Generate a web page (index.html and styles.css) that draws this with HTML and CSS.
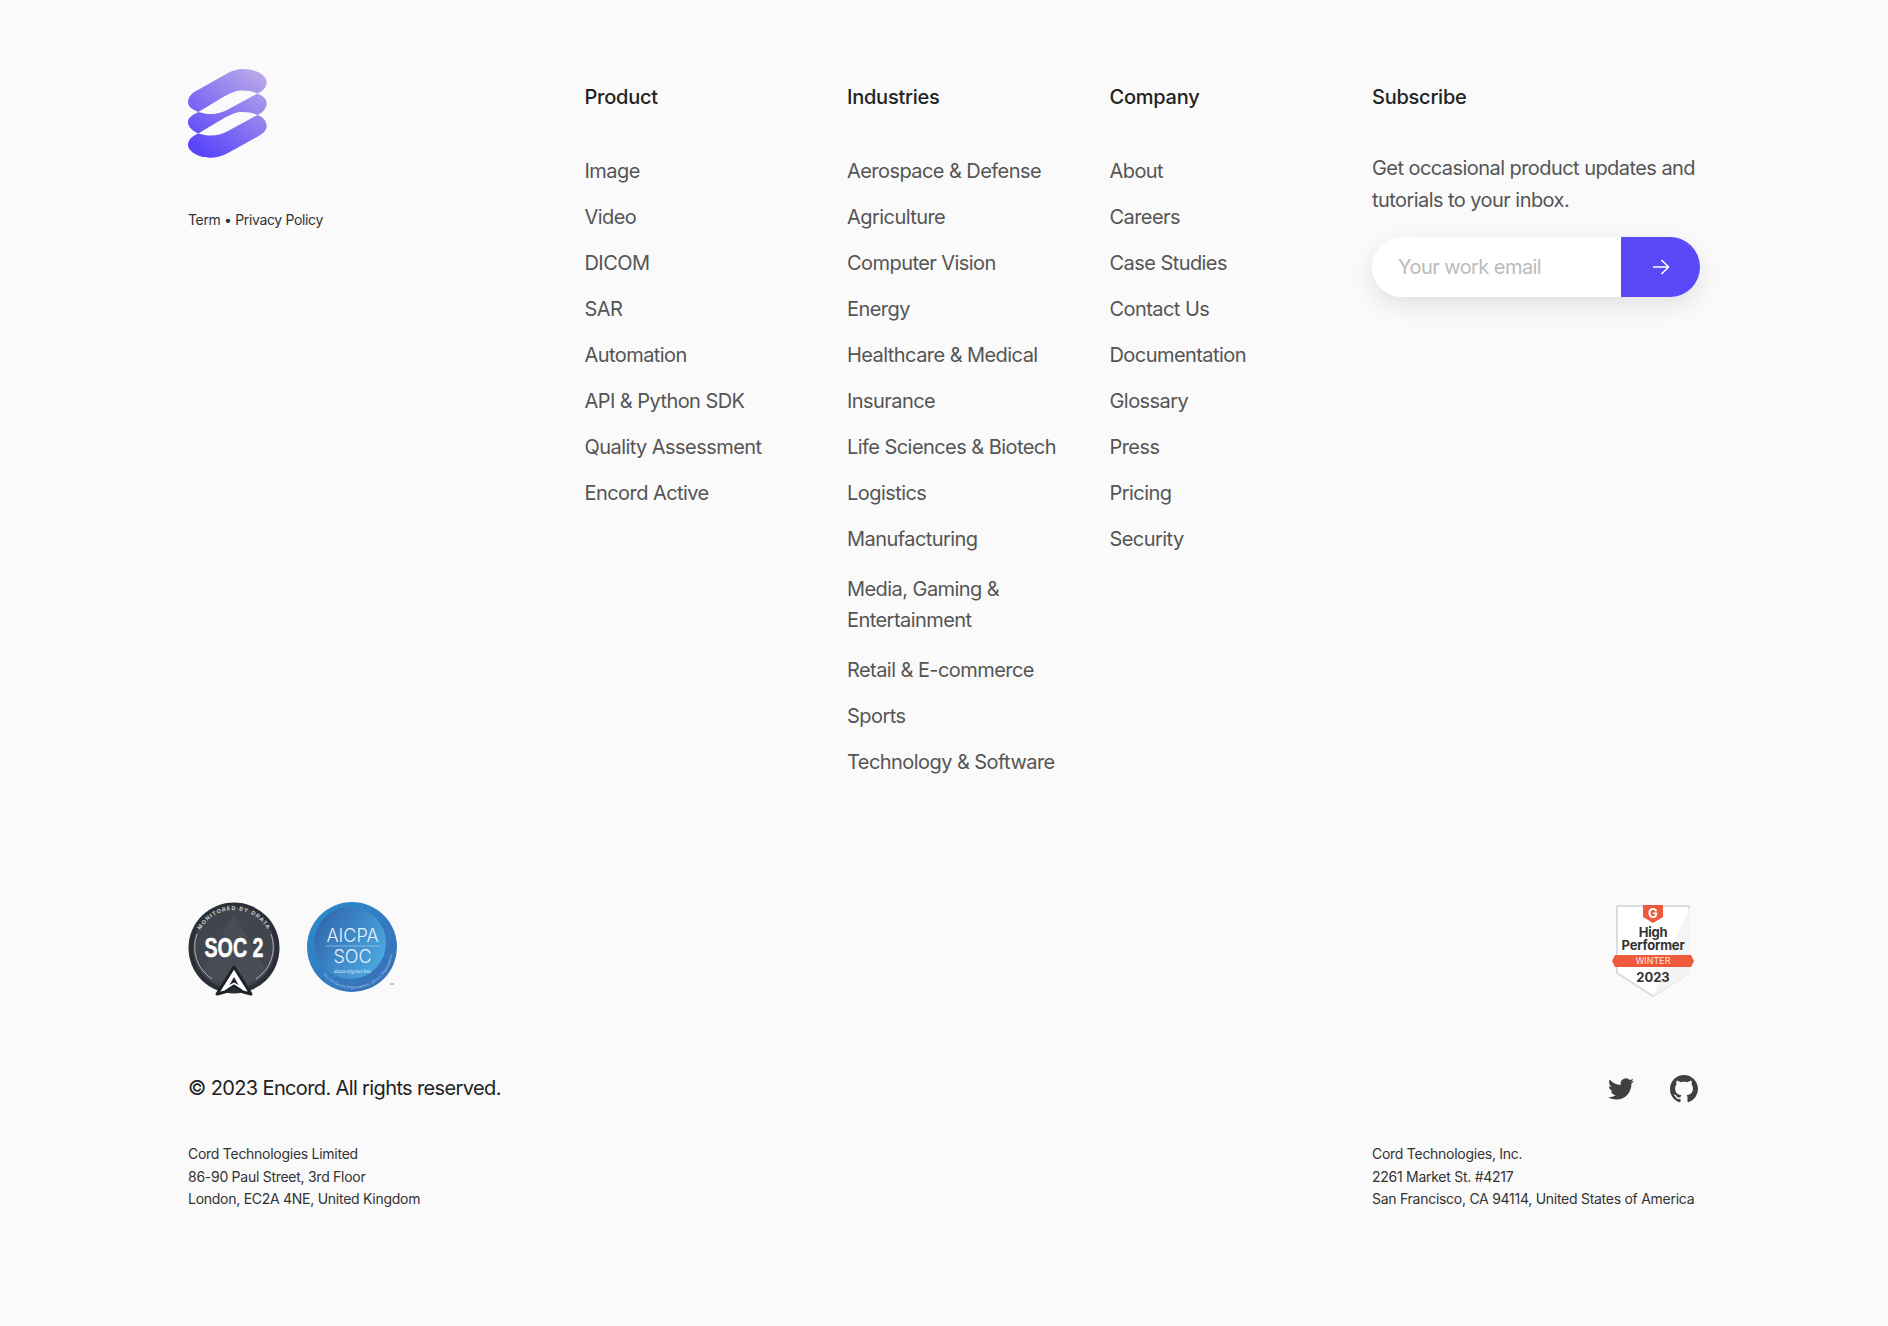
FILE: index.html
```html
<html>
  <head>
    <title>encord footer</title>
    <link rel="stylesheet" href="styles.css">
  </head>
  <body>
    <footer id="footer">
      <div id="columns">
        <div id="brand">
          <svg class="logo" viewBox="0 0 79 89" width="79" height="89">
            <defs>
              <linearGradient id="logo-fill" gradientUnits="userSpaceOnUse" x1="12" y1="82" x2="72" y2="4">
                <stop offset="0" stop-color="#5a45fa"/>
                <stop offset="1" stop-color="#b9a9e8"/>
              </linearGradient>
            </defs>
            <path fill="url(#logo-fill)" d="M10.3 43C3 40 0 37 0 33C0 28 4 24 8 22L40 4C46 1 50 0 55 0C68 0 78 6 78.7 13C79 18 75 22 69.5 24.5C62 21.5 53 20.5 46 23C42 24.5 40 25.5 37 27Z"/>
            <path fill="url(#logo-fill)" d="M10.3 43C20 46 30 46 39 41L69.5 24.5C75 27 78.7 30 78.7 34C78.7 39 75 43.500 69.500 46C62 43 53 42 46 44.500C42 46 40 47 37 48.500L10.300 64.500C3 61 0 57 0 53C0 49 4 46 10.300 43Z"/>
            <path fill="url(#logo-fill)" d="M10.300 64.500C20 67.500 30 67.500 39 62.500L69.500 46C75 48 78.700 52 78.700 57C78.700 61 75 65 69 68L40 84C35 87 28 88.700 22 88.700C10 88.700 0 82 0 76C0 71 4 67 10.300 64.500Z"/>
          </svg>
          <p class="legal"><a>Term</a> • <a>Privacy Policy</a></p>
        </div>

        <nav class="col">
          <h4>Product</h4>
          <a>Image</a>
          <a>Video</a>
          <a>DICOM</a>
          <a>SAR</a>
          <a>Automation</a>
          <a>API &amp; Python SDK</a>
          <a>Quality Assessment</a>
          <a>Encord Active</a>
        </nav>

        <nav class="col">
          <h4>Industries</h4>
          <a>Aerospace &amp; Defense</a>
          <a>Agriculture</a>
          <a>Computer Vision</a>
          <a>Energy</a>
          <a>Healthcare &amp; Medical</a>
          <a>Insurance</a>
          <a>Life Sciences &amp; Biotech</a>
          <a>Logistics</a>
          <a>Manufacturing</a>
          <a class="wrap">Media, Gaming &amp; Entertainment</a>
          <a>Retail &amp; E-commerce</a>
          <a>Sports</a>
          <a>Technology &amp; Software</a>
        </nav>

        <nav class="col">
          <h4>Company</h4>
          <a>About</a>
          <a>Careers</a>
          <a>Case Studies</a>
          <a>Contact Us</a>
          <a>Documentation</a>
          <a>Glossary</a>
          <a>Press</a>
          <a>Pricing</a>
          <a>Security</a>
        </nav>

        <div id="subscribe">
          <h4>Subscribe</h4>
          <p>Get occasional product updates and tutorials to your inbox.</p>
          <form class="signup">
            <input type="text" placeholder="Your work email">
            <button type="button">
              <svg viewBox="0 0 18 18" width="18" height="18" fill="none" stroke="#fff" stroke-width="1.6">
                <path d="M1 9H16.500M9.500 2L16.500 9L9.500 16"/>
              </svg>
            </button>
          </form>
        </div>
      </div>

      <div id="badges">
        <div class="certs">
          <svg class="soc2" viewBox="0 0 92 96" width="92" height="96">
            <defs>
              <path id="soc2-arc" d="M8 46A38 38 0 0 1 84 46"/>
            </defs>
            <circle cx="46" cy="46" r="45.500" fill="#2b2f36"/>
            <circle cx="46" cy="46" r="41" fill="#40454e"/>
            <path d="M46 12L14 68A41 41 0 0 0 78 68Z" fill="#474c55"/>
            <text class="soc2-arc"><textPath href="#soc2-arc" startOffset="50%" text-anchor="middle">MONITORED BY DRATA</textPath></text>
            <path d="M9 32A38 38 0 0 0 24 77M83 32A38 38 0 0 1 68 77" fill="none" stroke="#c9ccd0" stroke-width=".8"/>
            <text class="soc2-title" x="46" y="55" text-anchor="middle" textLength="59" lengthAdjust="spacingAndGlyphs">SOC 2</text>
            <path d="M46 65L63 92L55 90L46 84L37 90L29 92Z" fill="#fff" stroke="#1f2228" stroke-width="3" stroke-linejoin="round"/>
            <path d="M46 75L41.500 83L46 80.500L50.500 83Z" fill="#1f2228"/>
          </svg>
          <svg class="aicpa" viewBox="0 0 92 92" width="92" height="92">
            <defs>
              <linearGradient id="aicpa-ring" x1="0" y1="0" x2="1" y2="1">
                <stop offset="0" stop-color="#2a8ccf"/>
                <stop offset="1" stop-color="#3b6db5"/>
              </linearGradient>
              <linearGradient id="aicpa-core" x1="0" y1="0" x2="1" y2=".6">
                <stop offset="0" stop-color="#2f5fa8"/>
                <stop offset="1" stop-color="#4aa6de"/>
              </linearGradient>
              <path id="aicpa-arc" d="M8 58A39 39 0 0 0 84 36"/>
            </defs>
            <circle cx="45" cy="45" r="45" fill="url(#aicpa-ring)"/>
            <circle cx="43" cy="41" r="36" fill="url(#aicpa-core)"/>
            <text class="aicpa-big" x="45.500" y="39.500" text-anchor="middle">AICPA</text>
            <path d="M19 44H72" stroke="#b7d5ee" stroke-width=".6"/>
            <text class="aicpa-big" x="45.500" y="61" text-anchor="middle">SOC</text>
            <text class="aicpa-small" x="45.500" y="70.500" text-anchor="middle">aicpa.org/soc4so</text>
            <text class="aicpa-ring-text"><textPath href="#aicpa-arc" startOffset="50%" text-anchor="middle">SOC for Service Organizations | Service Organizations</textPath></text>
            <path d="M83 82H87" stroke="#777" stroke-width=".8"/>
          </svg>
        </div>
        <svg class="g2" viewBox="0 0 82 92" width="82" height="92">
          <path d="M5 1H77V68L41 91L5 68Z" fill="#fff" stroke="#dcdcdc" stroke-width="2"/>
          <path d="M78 1V68L41 91Z" fill="#f4f4f4"/>
          <path d="M31 0H51V12L41 18L31 12Z" fill="#f05a3c"/>
          <text class="g2-mark" x="41" y="13" text-anchor="middle">G</text>
          <text class="g2-title" x="41" y="32" text-anchor="middle">High</text>
          <text class="g2-title" x="41" y="45" text-anchor="middle">Performer</text>
          <path d="M3 50H79L82 56L79 62H3L0 56Z" fill="#f05a3c"/>
          <text class="g2-season" x="41" y="59" text-anchor="middle">WINTER</text>
          <text class="g2-year" x="41" y="77" text-anchor="middle">2023</text>
        </svg>
      </div>

      <div id="copyright">
        <span>© 2023 Encord. All rights reserved.</span>
        <div class="social">
          <svg viewBox="0 0 24 24" width="26" height="26" fill="#3f3f3f">
            <path d="M23.953 4.57a10 10 0 01-2.825.775 4.958 4.958 0 002.163-2.723c-.951.555-2.005.959-3.127 1.184a4.92 4.92 0 00-8.384 4.482C7.69 8.095 4.067 6.13 1.64 3.162a4.822 4.822 0 00-.666 2.475c0 1.71.87 3.213 2.188 4.096a4.904 4.904 0 01-2.228-.616v.06a4.923 4.923 0 003.946 4.827 4.996 4.996 0 01-2.212.085 4.936 4.936 0 004.604 3.417 9.867 9.867 0 01-6.102 2.105c-.39 0-.779-.023-1.17-.067a13.995 13.995 0 007.557 2.209c9.053 0 13.998-7.496 13.998-13.985 0-.21 0-.42-.015-.63A9.935 9.935 0 0024 4.59z"/>
          </svg>
          <svg viewBox="0 0 16 16" width="28" height="28" fill="#3f3f3f">
            <path d="M8 0C3.58 0 0 3.58 0 8c0 3.54 2.29 6.53 5.47 7.59.4.07.55-.17.55-.38 0-.19-.01-.82-.01-1.49-2.01.37-2.53-.49-2.69-.94-.09-.23-.48-.94-.82-1.13-.28-.15-.68-.52-.01-.53.63-.01 1.08.58 1.23.82.72 1.21 1.87.87 2.33.66.07-.52.28-.87.51-1.07-1.78-.2-3.64-.89-3.64-3.95 0-.87.31-1.59.82-2.15-.08-.2-.36-1.02.08-2.12 0 0 .67-.21 2.2.82.64-.18 1.32-.27 2-.27.68 0 1.36.09 2 .27 1.53-1.04 2.2-.82 2.2-.82.44 1.1.16 1.92.08 2.12.51.56.82 1.27.82 2.15 0 3.07-1.87 3.75-3.65 3.95.29.25.54.73.54 1.48 0 1.07-.01 1.93-.01 2.2 0 .21.15.46.55.38A8.013 8.013 0 0016 8c0-4.42-3.58-8-8-8z"/>
          </svg>
        </div>
      </div>

      <div id="addresses">
        <address>Cord Technologies Limited<br>86-90 Paul Street, 3rd Floor<br>London, EC2A 4NE, United Kingdom</address>
        <address class="us">Cord Technologies, Inc.<br>2261 Market St. #4217<br>San Francisco, CA 94114, United States of America</address>
      </div>
    </footer>
  </body>
</html>
```

FILE: styles.css
```css
* {
  box-sizing: border-box;
  margin: 0;
  padding: 0;
  font-family: "Inter", "Liberation Sans", sans-serif;
}
body {
  background: #fafafa;
  color: #222;
}
#footer {
  width: 1888px;
  height: 1326px;
  padding: 69px 188px 0;
  display: flex;
  flex-direction: column;
}
#columns {
  display: grid;
  grid-template-columns: 396.5px repeat(3, 262.5px) 1fr;
  height: 833px;
}
h4 {
  font-size: 20px;
  font-weight: 450;
  line-height: 28px;
  letter-spacing: -0.25px;
  color: #222;
  margin-bottom: 29px;
}
.logo {
  display: block;
}
.legal {
  margin-top: 51px;
  font-size: 14px;
  line-height: 22px;
  letter-spacing: -0.35px;
  color: #333;
}
.col,
#subscribe {
  padding-top: 14px;
}
.col {
  display: flex;
  flex-direction: column;
  gap: 19px;
  align-items: flex-start;
}
.col h4 {
  margin-bottom: 28px;
}
.col a {
  font-size: 20px;
  line-height: 27px;
  letter-spacing: -0.56px;
  color: #555;
}
.col a.wrap {
  width: 180px;
  line-height: 31px;
  margin: 2px 0 1.5px;
}
#subscribe p {
  font-size: 20px;
  line-height: 32px;
  letter-spacing: -0.56px;
  color: #555;
  margin-top: 41px;
}
.signup {
  display: flex;
  width: 328px;
  height: 60px;
  margin-top: 21px;
  border-radius: 30px;
  box-shadow: 0 8px 24px rgba(0, 0, 0, 0.1);
}
.signup input {
  flex-grow: 1;
  min-width: 0;
  border: 0;
  outline: none;
  background: white;
  border-radius: 30px 0 0 30px;
  padding-left: 26px;
  font-size: 20px;
  letter-spacing: -0.56px;
}
.signup input::placeholder {
  color: #bbb;
}
.signup button {
  width: 79px;
  flex-shrink: 0;
  border: 0;
  background: #5a49f8;
  border-radius: 0 30px 30px 0;
  display: flex;
  align-items: center;
  justify-content: center;
}
#badges {
  display: flex;
  justify-content: space-between;
  align-items: flex-start;
}
.certs {
  display: flex;
  gap: 27px;
}
.g2 {
  margin-right: 6px;
  margin-top: 3px;
}
.soc2-arc {
  font-size: 5.500px;
  font-weight: 600;
  letter-spacing: 1.1px;
  fill: #d5d7da;
}
.soc2-title {
  font-size: 28px;
  font-weight: 700;
  fill: #fff;
  stroke: #fff;
  stroke-width: 0.5px;
  font-family: "Liberation Sans", sans-serif;
}
.aicpa-big {
  font-size: 18px;
  font-weight: 300;
  fill: #e8f2fb;
}
.aicpa-small {
  font-size: 4.500px;
  fill: #dcebf7;
}
.aicpa-ring-text {
  font-size: 3.500px;
  fill: #a9cfee;
}
.g2-mark {
  font-size: 13px;
  font-weight: 700;
  fill: #fff;
}
.g2-title {
  font-size: 13px;
  font-weight: 700;
  letter-spacing: -0.2px;
  fill: #333;
}
.g2-season {
  font-size: 9px;
  fill: #ffe3dc;
}
.g2-year {
  font-size: 13px;
  font-weight: 700;
  fill: #333;
}
#copyright {
  display: flex;
  justify-content: space-between;
  align-items: center;
  margin-top: 77px;
  font-size: 20px;
  letter-spacing: -0.63px;
  color: #222;
}
#copyright span {
  margin-top: -3px;
}
.social {
  display: flex;
  align-items: center;
  gap: 36px;
  margin-right: 2px;
}
#addresses {
  display: grid;
  grid-template-columns: 1184px 1fr;
  margin-top: 40px;
}
address {
  font-style: normal;
  font-size: 14px;
  line-height: 22.500px;
  letter-spacing: -0.27px;
  color: #333;
  white-space: nowrap;
}
```
